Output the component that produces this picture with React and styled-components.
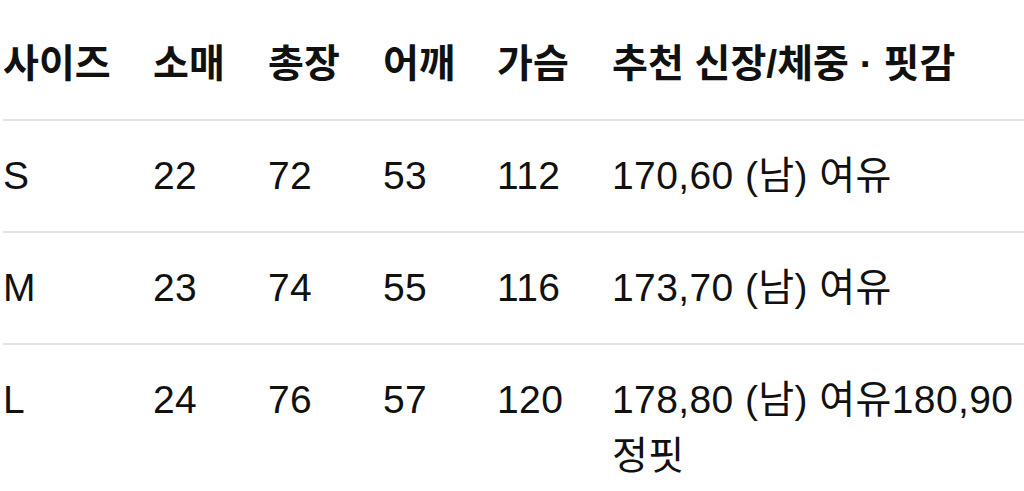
import React from "react";
import styled, { createGlobalStyle } from "styled-components";

const GlobalStyle = createGlobalStyle`
  html, body {
    margin: 0;
    padding: 0;
    background: #fff;
  }
  body {
    font-family: "Liberation Sans", "Noto Sans CJK KR", sans-serif;
    color: #111;
  }
`;

const Wrap = styled.div`
  padding: 9px 0 0 3px;
  overflow: hidden;
`;

const Table = styled.table`
  width: 1021px;
  table-layout: fixed;
  border-collapse: collapse;
  font-size: 39px;
  line-height: 56px;
`;

const Row = styled.tr`
  border-bottom: 2px solid #e3e3e3;
`;

const Cell = styled.td`
  width: ${(p) => p.$w || "auto"};
  padding: 27px 0;
  text-align: left;
  vertical-align: top;
  font-weight: ${(p) => (p.$head ? 700 : 400)};
  letter-spacing: ${(p) => (p.$head ? "0" : "0.4px")};
  word-break: keep-all;
  white-space: normal;
`;

const widths = ["150px", "115px", "115px", "114px", "115px", "auto"];

const head = ["사이즈", "소매", "총장", "어깨", "가슴", "추천 신장/체중 · 핏감"];

const rows = [
  ["S", "22", "72", "53", "112", "170,60 (남) 여유"],
  ["M", "23", "74", "55", "116", "173,70 (남) 여유"],
  ["L", "24", "76", "57", "120", "178,80 (남) 여유180,90 정핏"],
];

const App = () => {
  return (
    <Wrap>
      <GlobalStyle />
      <Table>
        <thead>
          <Row>
            {head.map((h, i) => (
              <Cell as="th" key={h} $w={widths[i]} $head>
                {h}
              </Cell>
            ))}
          </Row>
        </thead>
        <tbody>
          {rows.map((r) => (
            <Row key={r[0]}>
              {r.map((c, i) => (
                <Cell key={i} $w={widths[i]}>
                  {c}
                </Cell>
              ))}
            </Row>
          ))}
        </tbody>
      </Table>
    </Wrap>
  );
};

export default App;
